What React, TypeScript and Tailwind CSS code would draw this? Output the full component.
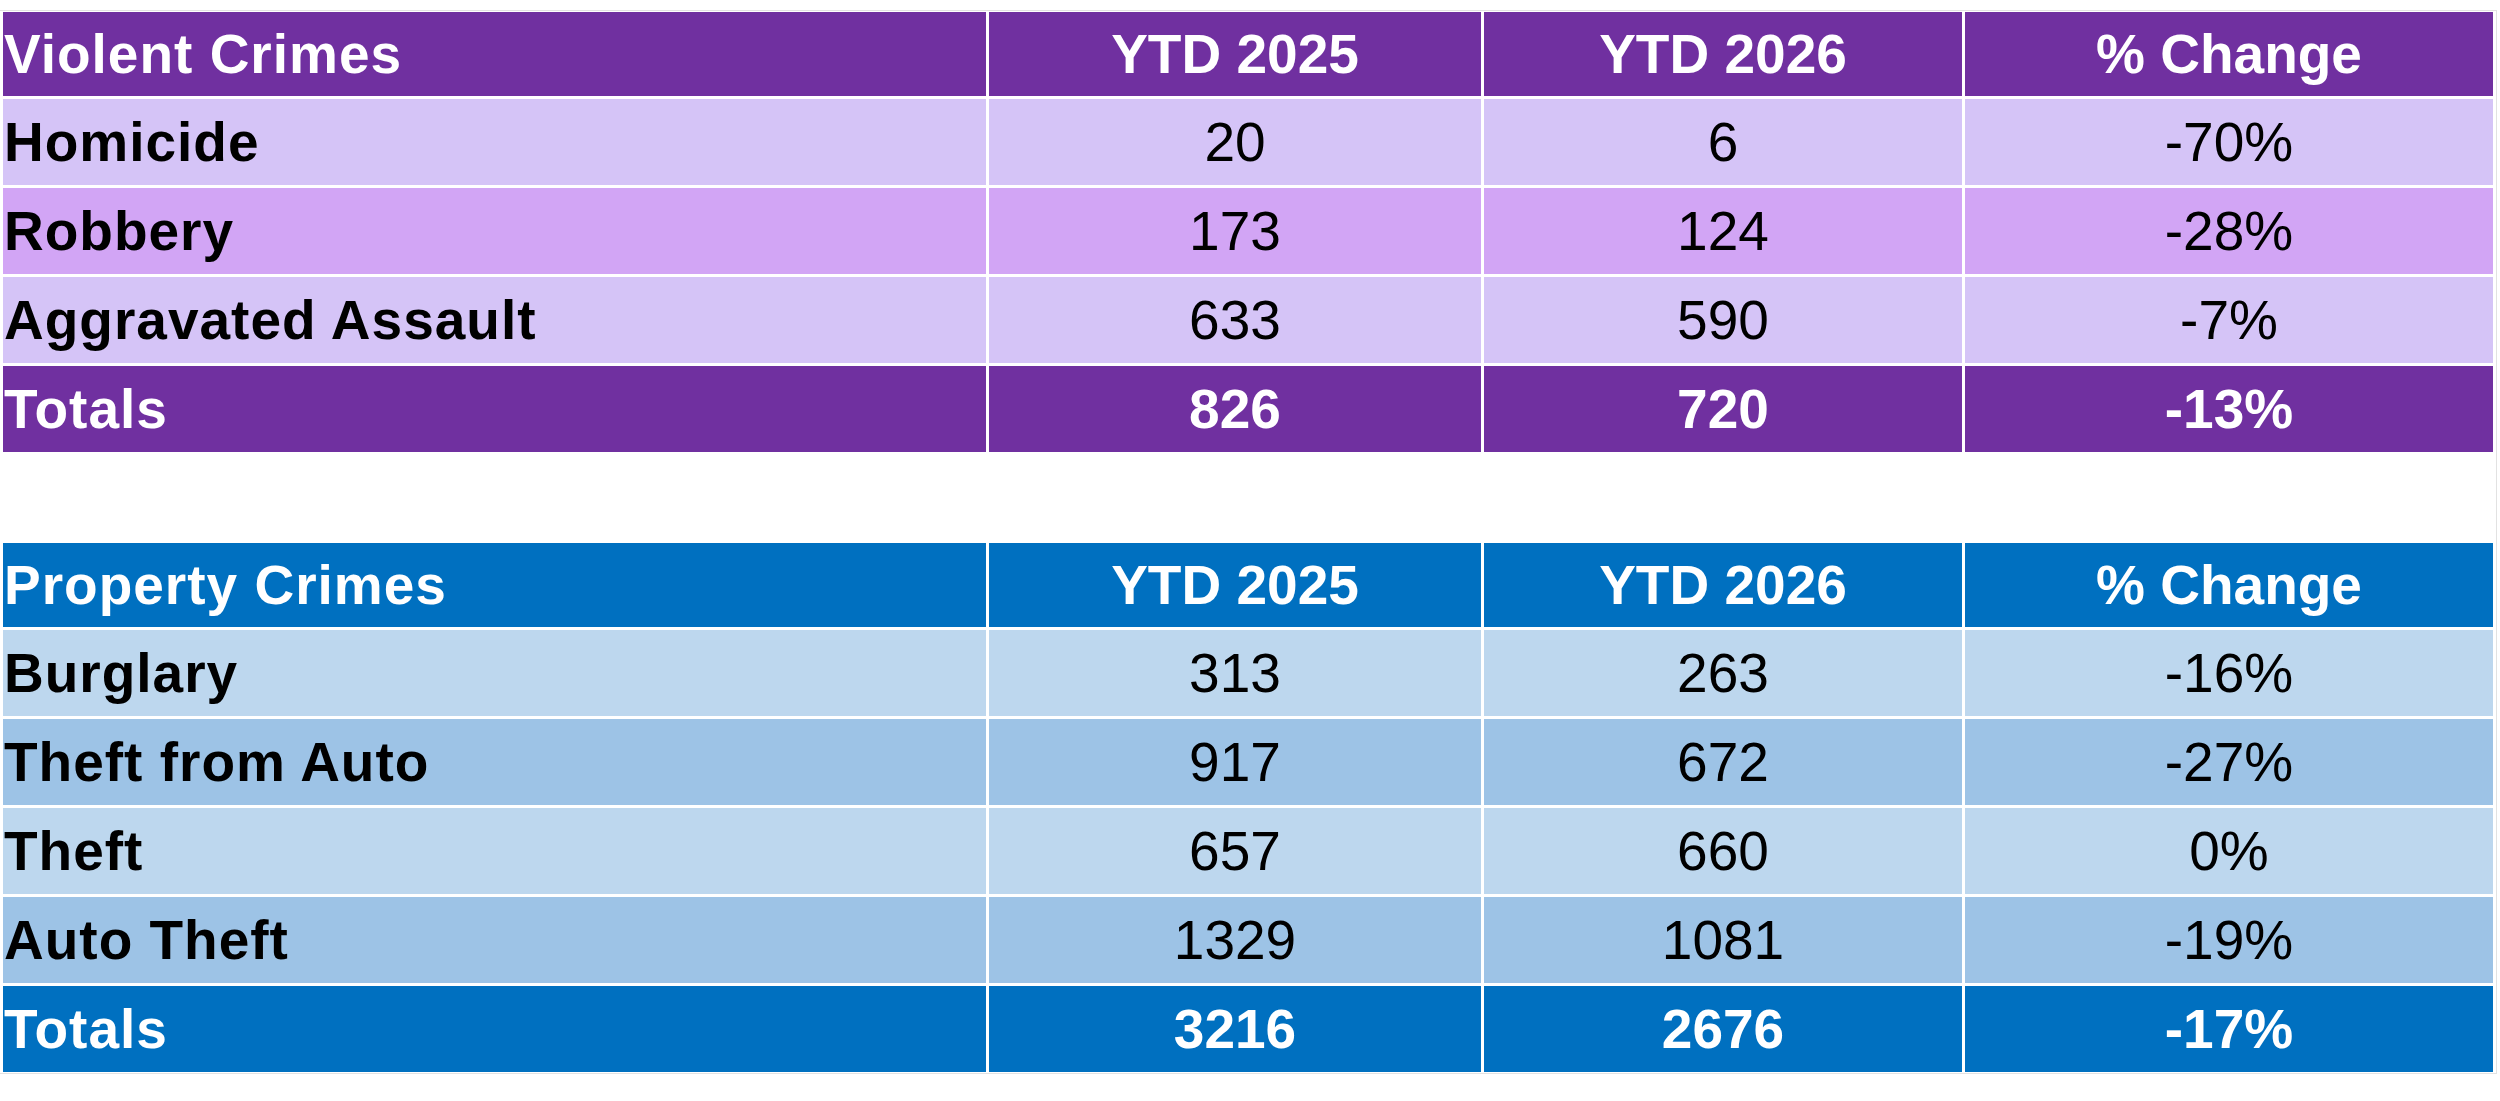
import React from "react";

type Row = { label: string; a: string; b: string; c: string; bg: string; head?: boolean };

const violent: Row[] = [
  { label: "Violent Crimes", a: "YTD 2025", b: "YTD 2026", c: "% Change", bg: "bg-[#7030a0]", head: true },
  { label: "Homicide", a: "20", b: "6", c: "-70%", bg: "bg-[#d5c4f7]" },
  { label: "Robbery", a: "173", b: "124", c: "-28%", bg: "bg-[#d2a5f5]" },
  { label: "Aggravated Assault", a: "633", b: "590", c: "-7%", bg: "bg-[#d5c4f7]" },
  { label: "Totals", a: "826", b: "720", c: "-13%", bg: "bg-[#7030a0]", head: true },
];

const property: Row[] = [
  { label: "Property Crimes", a: "YTD 2025", b: "YTD 2026", c: "% Change", bg: "bg-[#0070c0]", head: true },
  { label: "Burglary", a: "313", b: "263", c: "-16%", bg: "bg-[#bdd7ee]" },
  { label: "Theft from Auto", a: "917", b: "672", c: "-27%", bg: "bg-[#9dc3e6]" },
  { label: "Theft", a: "657", b: "660", c: "0%", bg: "bg-[#bdd7ee]" },
  { label: "Auto Theft", a: "1329", b: "1081", c: "-19%", bg: "bg-[#9dc3e6]" },
  { label: "Totals", a: "3216", b: "2676", c: "-17%", bg: "bg-[#0070c0]", head: true },
];

function Table({ rows }: { rows: Row[] }) {
  return (
    <div className="grid grid-cols-[983px_492px_478px_528px] gap-[3px] bg-white">
      {rows.map((r, i) => {
        const h = i === 0 ? "h-[84px]" : "h-[86px]";
        const txt = r.head ? "text-white font-bold" : "text-black";
        return (
          <React.Fragment key={i}>
            <div className={`${r.bg} ${h} flex items-center pl-[1px] font-bold tracking-[1px] ${r.head ? "text-white" : "text-black"}`}>
              {r.label}
            </div>
            <div className={`${r.bg} ${h} flex items-center justify-center ${txt}`}>{r.a}</div>
            <div className={`${r.bg} ${h} flex items-center justify-center ${txt}`}>{r.b}</div>
            <div className={`${r.bg} ${h} flex items-center justify-center ${txt}`}>{r.c}</div>
          </React.Fragment>
        );
      })}
    </div>
  );
}

export default function App() {
  return (
    <div className="w-[2500px] h-[1101px] bg-white pt-[10px] font-['Liberation_Sans',Arial,sans-serif] text-[55px] leading-none">
      <div className="w-[2497px] border-t border-r border-b border-[#e2e2e2] pt-[1px] pl-[3px] pb-[1px]">
        <Table rows={violent} />
        <div className="h-[91px]" />
        <Table rows={property} />
      </div>
    </div>
  );
}
